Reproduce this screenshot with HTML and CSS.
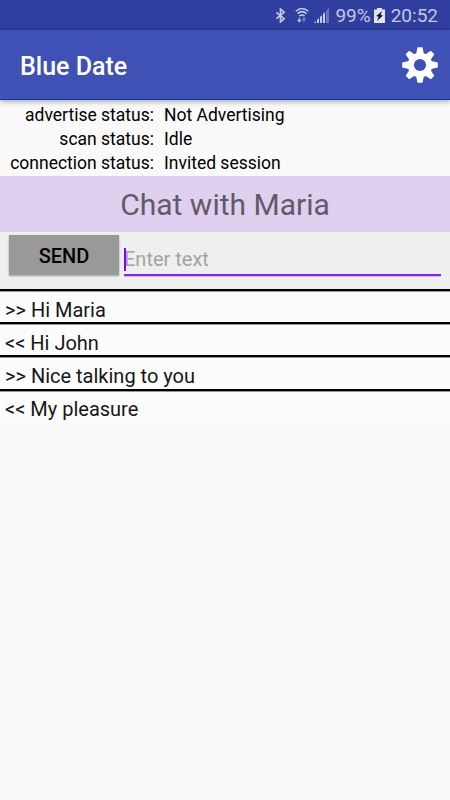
FILE: index.html
```html
<!DOCTYPE html>
<html lang="en">
<head>
  <meta charset="UTF-8" />
  <meta name="viewport" content="width=device-width, initial-scale=1" />
  <title>Blue Date</title>
  <link rel="stylesheet" href="styles.css">
</head>
<body>

  <!-- Status Bar -->
  <div class="status-bar">
    <svg class="bluetooth" width="11" height="15" viewBox="0 0 12 16" fill="none" stroke="currentColor" stroke-width="1.8">
      <path d="M1.5 4.5 L10 11.5 L6 15 V1 L10 4.5 L1.5 11.5" />
    </svg>
    <svg class="wifi" width="14" height="16" viewBox="0 0 15 17" fill="none" stroke="currentColor" stroke-width="1.7">
      <path d="M.8 4.5 Q7.5 -1.5 14.2 4.5 M2.8 7 Q7.5 2.8 12.2 7 M4.8 9.6 Q7.5 7.4 10.2 9.6" />
      <path stroke-width="1.3" d="M4.6 11.5 V15.7 M2.8 13.8 L4.6 15.7 L6.4 13.8" />
      <path stroke-width="1.3" opacity=".5" d="M9.6 16 V11.8 M7.9 13.6 L9.6 11.8 L11.4 13.6" />
    </svg>
    <svg class="signal" width="15" height="15" viewBox="0 0 15 15" fill="currentColor">
      <path d="M0 15 L2 13 V15 Z M3 12 L5 10 V15 H3 Z M6 9 L8 7 V15 H6 Z M9 6 L11 4 V15 H9 Z" />
      <path opacity=".4" d="M12 3 L15 0 V15 H12 Z" />
    </svg>
    <span class="percent">99%</span>
    <svg class="battery" width="11" height="15" viewBox="0 0 11 15">
      <path fill="#e2e4f5" d="M3 0 H8 V1.5 H11 V15 H0 V1.5 H3 Z" />
      <path fill="#10143a" d="M8.2 3 L2.2 8 L4.6 8.8 L3 13 L9 7.6 L6.6 7 Z" />
    </svg>
    <span class="clock">20:52</span>
  </div>

  <!-- Toolbar -->
  <header class="toolbar">
    <h1>Blue Date</h1>
    <svg class="settings" width="36" height="36" viewBox="-18 -18 36 36">
      <g fill="#fff">
        <path id="teeth" d="M-3.9 -11 L-2.5 -17.8 H2.5 L3.9 -11 V11 L2.5 17.8 H-2.5 L-3.9 11 Z" />
        <use href="#teeth" transform="rotate(45)" />
        <use href="#teeth" transform="rotate(90)" />
        <use href="#teeth" transform="rotate(135)" />
        <circle r="12.3" />
      </g>
      <circle r="6.1" fill="#3f51b5" />
    </svg>
  </header>

  <!-- Connection Info -->
  <div class="info">
    <span class="label">advertise status:</span><span>Not Advertising</span>
    <span class="label">scan status:</span><span>Idle</span>
    <span class="label">connection status:</span><span>Invited session</span>
  </div>

  <!-- Chat -->
  <h2 class="chat-title">Chat with Maria</h2>
  <form class="send-form">
    <button type="button">SEND</button>
    <div class="field">
      <input type="text" placeholder="Enter text" />
    </div>
  </form>
  <ul class="messages">
    <li>&gt;&gt; Hi Maria</li>
    <li>&lt;&lt; Hi John</li>
    <li>&gt;&gt; Nice talking to you</li>
    <li>&lt;&lt; My pleasure</li>
  </ul>

</body>
</html>
```

FILE: styles.css
```css
* {
  box-sizing: border-box;
}

body {
  font-family: Roboto, sans-serif;
  background-color: #fafafa;
  color: #000;
  margin: 0;
}

.status-bar {
  height: 30px;
  padding-right: 12px;
  background: linear-gradient(#303f9f 27px, #2b388e);
  color: #c5c9e6;
  display: flex;
  align-items: center;
  justify-content: flex-end;
  font-size: 19px;
  line-height: 30px;
}

.status-bar span {
  padding-top: 2px;
}

.wifi {
  margin-left: 9px;
}

.signal {
  margin-left: 5px;
}

.percent {
  margin-left: 6px;
}

.battery {
  margin-left: 3px;
}

.clock {
  margin-left: 6px;
}

.toolbar {
  position: relative;
  height: 70px;
  padding: 0 12px 0 20px;
  background-color: #3f51b5;
  border-bottom: 1px solid #0b35b0;
  box-shadow: 0 2px 5px rgba(0,0,0,0.3);
  display: flex;
  align-items: center;
  justify-content: space-between;
}

.toolbar h1 {
  margin: 3px 0 0;
  color: #fff;
  font-size: 25px;
  font-weight: 500;
}

.info {
  height: 76px;
  padding: 3px 0 0 10px;
  display: grid;
  grid-template-columns: 144px 1fr;
  grid-auto-rows: 24px;
  column-gap: 10px;
  font-size: 17.5px;
  line-height: 24px;
}

.label {
  text-align: right;
}

.chat-title {
  height: 56px;
  margin: 0;
  background-color: #dfd0ef;
  color: #625a69;
  font-size: 30px;
  font-weight: 400;
  line-height: 58px;
  text-align: center;
}

.send-form {
  height: 57px;
  padding: 3px 9px 0;
  background-color: #efefef;
  display: flex;
  gap: 5px;
}

.send-form button {
  width: 110px;
  height: 40px;
  padding: 2px 0 0;
  border: none;
  background-color: #999;
  box-shadow: 0 1px 2px rgba(0,0,0,0.35);
  font-family: inherit;
  font-size: 20px;
  font-weight: 500;
  color: #000;
}

.field {
  position: relative;
  flex: 1;
  height: 41px;
  border-bottom: 2px solid #8a22f0;
  box-shadow: 0 1px 0 #d3b6f0;
}

/* text cursor */
.field::before {
  content: "";
  position: absolute;
  left: 0;
  top: 13px;
  width: 2px;
  height: 23px;
  background-color: #8b00ff;
}

.field input {
  width: 100%;
  height: 39px;
  padding: 8px 0 0;
  border: none;
  outline: none;
  background: none;
  font-family: inherit;
  font-size: 20px;
}

.field input::placeholder {
  color: #a3a3a3;
}

.messages {
  list-style-type: none;
  margin: 0;
  padding: 0;
  background-color: #fcfcfc;
}

.messages li {
  height: 33.2px;
  padding: 6.6px 5px 0;
  border-top: 2px solid #000;
  box-shadow: inset 0 1px 0 rgba(0,0,0,0.4);
  color: #161616;
  font-size: 20px;
  line-height: 24px;
}
```
